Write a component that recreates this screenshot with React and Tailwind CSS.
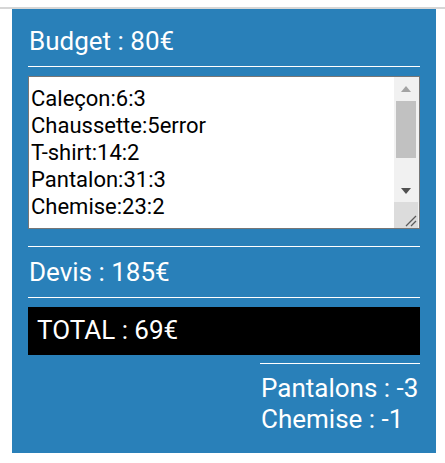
import React from "react";

const lines = ["Caleçon:6:3", "Chaussette:5error", "T-shirt:14:2", "Pantalon:31:3", "Chemise:23:2"];

export default function App() {
  return (
    <div className="w-[445px] h-[463px] bg-white" style={{ fontFamily: "Roboto, 'Liberation Sans', sans-serif" }}>
      <div className="h-[7px]" />
      <div className="h-[2px] bg-[#d6d6d6]" />
      <div className="mx-[12px] w-[424px] h-[444px] bg-[#2980b9] px-[16px] pt-[17px] text-white">
        <div className="text-[26px] leading-[31px] pl-[1px]">Budget : 80€</div>
        <div className="mt-[9px] h-px bg-white" />
        <div className="mt-[9px] h-[153px] border border-[#767676] bg-white flex">
          <div className="flex-1 pt-[8px] pl-[2px] text-black text-[22px] leading-[27px] overflow-hidden">
            {lines.map((l) => (
              <div key={l}>{l}</div>
            ))}
          </div>
          <div className="w-[25px] flex flex-col bg-[#f1f1f1] pr-[1px]">
            <div className="h-[24px] flex items-center justify-center">
              <svg width="10" height="6" viewBox="0 0 10 6"><path d="M5 0 L10 6 L0 6 Z" fill="#a3a3a3" /></svg>
            </div>
            <div className="mx-[2px] h-[57px] bg-[#c1c1c1]" />
            <div className="flex-1 flex items-end justify-center pb-[8px]">
              <svg width="10" height="6" viewBox="0 0 10 6"><path d="M0 0 L10 0 L5 6 Z" fill="#505050" /></svg>
            </div>
            <div className="h-[26px] bg-[#dcdcdc] relative">
              <svg className="absolute right-[1px] bottom-[1px]" width="14" height="14" viewBox="0 0 14 14">
                <path d="M13 3 L3 13 M13 8 L8 13" stroke="#5a5a5a" strokeWidth="1.3" />
              </svg>
            </div>
          </div>
        </div>
        <div className="mt-[17px] h-px bg-white" />
        <div className="mt-[10px] text-[26px] leading-[31px] pl-[1px]">Devis : 185€</div>
        <div className="mt-[9px] h-px bg-white" />
        <div className="mt-[9px] h-[48px] bg-black pl-[9px] pt-[8px] text-[26px] leading-[31px]">TOTAL : 69€</div>
        <div className="ml-auto w-[160px] mt-[8px]">
          <div className="h-px bg-white" />
          <div className="mt-[9px] text-[26px] leading-[31px] pl-[1px]">
            <div>Pantalons : -3</div>
            <div>Chemise : -1</div>
          </div>
        </div>
      </div>
    </div>
  );
}
